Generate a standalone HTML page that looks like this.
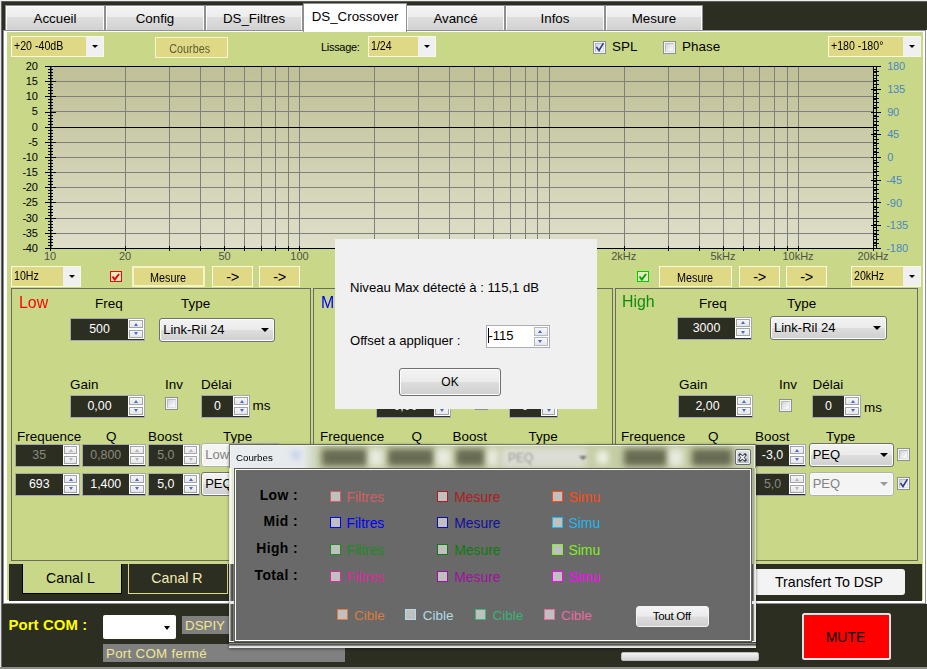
<!DOCTYPE html><html><head><meta charset='utf-8'><title>DSPiy</title><style>
*,*:before,*:after{box-sizing:border-box;margin:0;padding:0}
html,body{width:927px;height:669px;overflow:hidden}
body{background:#2d2e22;font-family:"Liberation Sans",sans-serif;font-size:13.33px;color:#000;position:relative}
.a{position:absolute}
.t{position:absolute;white-space:nowrap;line-height:1}
.tab{position:absolute;top:5px;height:26px;border:1px solid #8e8f8f;border-bottom:none;background:linear-gradient(#f4f4f4 0,#ececec 45%,#dedede 46%,#d0d0d0 100%);box-shadow:inset 1px 1px 0 #fcfcfc,inset -1px 0 0 #fcfcfc;text-align:center;font-size:13.33px;line-height:25px}
.tab.sel{top:3px;height:29px;background:#fff;box-shadow:none;line-height:25px;z-index:3}
.cb{position:absolute;height:21px;border:1px solid #fbf8e0;background:#dfd885;font-size:11px;letter-spacing:-0.35px;line-height:18px;padding-left:2px;white-space:nowrap}
.cb b{display:inline-block;font-weight:normal;font-size:12px;letter-spacing:0;transform:scaleX(.885);transform-origin:0 50%}
.yb b{display:inline-block;font-weight:normal;font-size:12px;letter-spacing:0;transform:scaleX(.9)}
.cb i{position:absolute;right:0;top:0;bottom:0;width:17px;background:#f0f0f0}
.cb i:after{content:"";position:absolute;left:6px;top:8px;border:3px solid transparent;border-top:3px solid #000;border-bottom:none}
.yb{position:absolute;height:21px;border:2px solid #f8f2c6;background:#dfd885;font-size:11px;letter-spacing:-0.35px;line-height:20px;text-align:center;white-space:nowrap}
.yb.dis{color:#5e5c34;border-width:1px;border-color:#faf5cc;line-height:22px;letter-spacing:-0.6px}
.nud{position:absolute;height:23px;border:1px solid #a4a6b0;background:#2d2e22;color:#fff;font-size:12.4px;line-height:21px;text-align:center;white-space:nowrap}
.nud.dis{color:#8a8b80}
.nud s{position:absolute;right:0;top:0;bottom:1px;width:16px;background:#fff;text-decoration:none}
.nud s:before,.nud s:after{content:"";position:absolute;left:1px;width:13.5px;height:8px;border:1px solid #a2a4ac;background:linear-gradient(#f6f6f6,#e6e6e6)}
.nud s:before{top:1px}
.nud s:after{top:10.5px}
.nud u{position:absolute;right:5.6px;width:0;height:0;border:2.7px solid transparent;z-index:2}
.nud u.up{top:3.8px;border-bottom:3.2px solid #4a68d4;border-top:none}
.nud u.dn{top:13.2px;border-top:3.2px solid #4a68d4;border-bottom:none}
.nud.dis u.up{border-bottom-color:#b4b4b4}
.nud.dis u.dn{border-top-color:#b4b4b4}
.nud span{position:absolute;left:0;right:16px;top:0;bottom:0}
.cmb{position:absolute;border:1px solid #707070;border-radius:3px;background:linear-gradient(#f3f3f3 0,#ebebeb 48%,#dddddd 52%,#cfcfcf 100%);box-shadow:inset 0 0 0 1px #fcfcfc;font-size:13px;line-height:22px;padding-left:3.2px;white-space:nowrap}
.cmb:after{content:"";position:absolute;right:5px;top:9px;border:4px solid transparent;border-top:4px solid #000;border-bottom:none}
.cmb.dis{color:#838383;background:#f4f4f4;border-color:#adb2b5}
.cmb.dis:after{border-top-color:#9a9a9a}
.chk{position:absolute;width:13px;height:13px;border:1px solid #8e8f8f;background:#f4f4f4}
.chk:before{content:"";position:absolute;left:1px;top:1px;width:9px;height:9px;border:1px solid #b8bcc4;border-right-color:#dcdee2;border-bottom-color:#dcdee2;background:linear-gradient(135deg,#cfd2d8,#f6f6f6 80%)}
.chk.on:after{content:"";position:absolute;left:1.5px;top:0.5px;width:9px;height:10px;background:#2c3c8c;clip-path:polygon(0.3px 5px,1.6px 3.9px,3.4px 6.6px,7.3px 0.2px,8.6px 1px,3.6px 9.6px)}
.grp{position:absolute;border:1px solid #6a6c60}
.lb{font-size:13.45px}
.big{font-size:16.7px;transform:scaleX(.95);transform-origin:0 0}
.ck{position:absolute;width:11px;height:11px;background:#c0c0c0;border:1.5px solid}
.cl{position:absolute;font-size:13.9px;white-space:nowrap;line-height:1}
.bl{position:absolute;font-size:13.9px;font-weight:bold;white-space:nowrap;line-height:1;text-align:right;width:70px;letter-spacing:.4px}
.wbtn{position:absolute;border:1px solid #707070;border-radius:3px;background:linear-gradient(#f3f3f3 0,#ebebeb 48%,#dddddd 52%,#cfcfcf 100%);box-shadow:inset 0 0 0 1px #fcfcfc;text-align:center;white-space:nowrap}
</style></head><body>
<div class="a" style="left:0;top:0;width:927px;height:1px;background:#eef0f4"></div>
<div class="a" style="left:0;top:0;width:1px;height:669px;background:#e4e7ee"></div>
<div class="a" style="left:1px;top:1px;width:926px;height:1px;background:#5d5e58"></div>
<div class="a" style="left:1px;top:1px;width:1px;height:668px;background:#6b6c68"></div>
<div class="a" style="left:0;top:667px;width:927px;height:2px;background:#8d8e8a"></div>
<div class="tab" style="left:5px;width:100px">Accueil</div>
<div class="tab" style="left:105px;width:100px">Config</div>
<div class="tab" style="left:205px;width:98px">DS_Filtres</div>
<div class="tab sel" style="left:303px;width:104px">DS_Crossover</div>
<div class="tab" style="left:406px;width:99px">Avancé</div>
<div class="tab" style="left:505px;width:100px">Infos</div>
<div class="tab" style="left:605px;width:98px">Mesure</div>
<div class="a" style="left:3px;top:30px;width:923px;height:574px;background:#fff;border:1px solid #8f9096;border-top-color:#8f9096"></div>
<div class="a" style="left:926px;top:30px;width:1px;height:574px;background:#fff"></div>
<div class="a" style="left:7px;top:32px;width:916px;height:568px;background:#c9d888"></div>
<div class="a" style="left:304px;top:30px;width:102px;height:2px;background:#fff;z-index:4"></div>
<div class="cb" style="left:11px;top:36px;width:93px"><b>+20 -40dB</b><i></i></div>
<div class="yb dis" style="left:155px;top:37px;width:73px;padding-right:3px"><b>Courbes</b></div>
<div class="t" style="left:321px;top:42px;font-size:11px;letter-spacing:-0.3px">Lissage:</div>
<div class="cb" style="left:368px;top:36px;width:68px"><b>1/24</b><i></i></div>
<div class="chk on" style="left:593px;top:41px"></div>
<div class="t lb" style="left:612px;top:40px">SPL</div>
<div class="chk" style="left:663px;top:41px"></div>
<div class="t lb" style="left:682px;top:40px">Phase</div>
<div class="cb" style="left:828px;top:36px;width:93px"><b>+180 -180°</b><i></i></div>
<svg class="a" style="left:0;top:58px" width="927" height="205" viewBox="0 58 927 205" shape-rendering="crispEdges"><defs><linearGradient id="pg" x1="0" y1="0" x2="0" y2="1"><stop offset="0" stop-color="#bfc096"/><stop offset="1" stop-color="#dfdfca"/></linearGradient></defs><rect x="51" y="66" width="823" height="182" fill="url(#pg)"/><path d="M51 81.5H873M51 96.5H873M51 111.5H873M51 142.5H873M51 157.5H873M51 172.5H873M51 187.5H873M51 202.5H873M51 218.5H873M51 233.5H873M125.5 66V248M169.5 66V248M200.5 66V248M224.5 66V248M244.5 66V248M261.5 66V248M275.5 66V248M288.5 66V248M299.5 66V248M374.5 66V248M418.5 66V248M449.5 66V248M474.5 66V248M493.5 66V248M510.5 66V248M525.5 66V248M537.5 66V248M549.5 66V248M624.5 66V248M668.5 66V248M699.5 66V248M723.5 66V248M743.5 66V248M759.5 66V248M774.5 66V248M787.5 66V248M798.5 66V248" stroke="#7f807c" stroke-width="1" fill="none"/><path d="M45 66.5H881M51 127.5H876M46 248.5H877" stroke="#000" stroke-width="1" fill="none"/><path d="M50.5 66V249M873.5 66V249M876.5 66V249" stroke="#000" stroke-width="1" fill="none"/><path d="M51.5 66V249" stroke="#000" stroke-opacity=".45" stroke-width="1" fill="none"/><path d="M45 66.5H56M873 66.5H877M48 69.5H53M873 69.5H877M48 72.5H53M873 72.5H877M48 75.5H53M873 75.5H877M48 78.5H53M873 78.5H877M45 81.5H56M873 81.5H877M48 84.5H53M873 84.5H877M48 87.5H53M873 87.5H877M48 90.5H53M873 90.5H877M48 93.5H53M873 93.5H877M45 96.5H56M873 96.5H877M48 99.5H53M873 99.5H877M48 102.5H53M873 102.5H877M48 105.5H53M873 105.5H877M48 108.5H53M873 108.5H877M45 112.5H56M873 112.5H877M48 115.5H53M873 115.5H877M48 118.5H53M873 118.5H877M48 121.5H53M873 121.5H877M48 124.5H53M873 124.5H877M45 127.5H56M873 127.5H877M48 130.5H53M873 130.5H877M48 133.5H53M873 133.5H877M48 136.5H53M873 136.5H877M48 139.5H53M873 139.5H877M45 142.5H56M873 142.5H877M48 145.5H53M873 145.5H877M48 148.5H53M873 148.5H877M48 151.5H53M873 151.5H877M48 154.5H53M873 154.5H877M45 157.5H56M873 157.5H877M48 160.5H53M873 160.5H877M48 163.5H53M873 163.5H877M48 166.5H53M873 166.5H877M48 169.5H53M873 169.5H877M45 172.5H56M873 172.5H877M48 175.5H53M873 175.5H877M48 178.5H53M873 178.5H877M48 181.5H53M873 181.5H877M48 184.5H53M873 184.5H877M45 187.5H56M873 187.5H877M48 190.5H53M873 190.5H877M48 193.5H53M873 193.5H877M48 196.5H53M873 196.5H877M48 199.5H53M873 199.5H877M45 202.5H56M873 202.5H877M48 206.5H53M873 206.5H877M48 209.5H53M873 209.5H877M48 212.5H53M873 212.5H877M48 215.5H53M873 215.5H877M45 218.5H56M873 218.5H877M48 221.5H53M873 221.5H877M48 224.5H53M873 224.5H877M48 227.5H53M873 227.5H877M48 230.5H53M873 230.5H877M45 233.5H56M873 233.5H877M48 236.5H53M873 236.5H877M48 239.5H53M873 239.5H877M48 242.5H53M873 242.5H877M48 245.5H53M873 245.5H877M45 248.5H56M873 248.5H877" stroke="#000" stroke-width="1" fill="none"/><path d="M871 66.5H881M874 71.5H879M874 75.5H879M874 80.5H879M874 84.5H879M871 89.5H881M874 93.5H879M874 98.5H879M874 102.5H879M874 107.5H879M871 112.5H881M874 116.5H879M874 121.5H879M874 125.5H879M874 130.5H879M871 134.5H881M874 139.5H879M874 143.5H879M874 148.5H879M874 152.5H879M871 157.5H881M874 162.5H879M874 166.5H879M874 171.5H879M874 175.5H879M871 180.5H881M874 184.5H879M874 189.5H879M874 193.5H879M874 198.5H879M871 202.5H881M874 207.5H879M874 212.5H879M874 216.5H879M874 221.5H879M871 225.5H881M874 230.5H879M874 234.5H879M874 239.5H879M874 243.5H879M871 248.5H881" stroke="#000" stroke-width="1" fill="none"/><path d="M125.5 246V251M169.5 246V251M200.5 246V251M224.5 246V251M244.5 246V251M261.5 246V251M275.5 246V251M288.5 246V251M299.5 246V251M374.5 246V251M418.5 246V251M449.5 246V251M474.5 246V251M493.5 246V251M510.5 246V251M525.5 246V251M537.5 246V251M549.5 246V251M624.5 246V251M668.5 246V251M699.5 246V251M723.5 246V251M743.5 246V251M759.5 246V251M774.5 246V251M787.5 246V251M798.5 246V251M50.5 246V251M873.5 246V251" stroke="#000" stroke-width="1" fill="none"/><g font-family="Liberation Sans, sans-serif" font-size="11" letter-spacing="-0.3"><text x="37.5" y="70.2" text-anchor="end" fill="#000">20</text><text x="37.5" y="85.2" text-anchor="end" fill="#000">15</text><text x="37.5" y="100.2" text-anchor="end" fill="#000">10</text><text x="37.5" y="115.2" text-anchor="end" fill="#000">5</text><text x="37.5" y="131.2" text-anchor="end" fill="#000">0</text><text x="37.5" y="146.2" text-anchor="end" fill="#000">-5</text><text x="37.5" y="161.2" text-anchor="end" fill="#000">-10</text><text x="37.5" y="176.2" text-anchor="end" fill="#000">-15</text><text x="37.5" y="191.2" text-anchor="end" fill="#000">-20</text><text x="37.5" y="206.2" text-anchor="end" fill="#000">-25</text><text x="37.5" y="222.2" text-anchor="end" fill="#000">-30</text><text x="37.5" y="237.2" text-anchor="end" fill="#000">-35</text><text x="37.5" y="252.2" text-anchor="end" fill="#000">-40</text><text x="887.3" y="70.0" fill="#4a86c0">180</text><text x="887.3" y="92.8" fill="#4a86c0">135</text><text x="887.3" y="115.5" fill="#4a86c0">90</text><text x="887.3" y="138.2" fill="#4a86c0">45</text><text x="887.3" y="161.0" fill="#4a86c0">0</text><text x="886.2" y="183.8" fill="#4a86c0" letter-spacing="0">-45</text><text x="886.2" y="206.5" fill="#4a86c0" letter-spacing="0">-90</text><text x="886.2" y="229.2" fill="#4a86c0" letter-spacing="0">-135</text><text x="886.2" y="252.0" fill="#4a86c0" letter-spacing="0">-180</text><text x="50.1" y="260" text-anchor="middle" fill="#4e5048" letter-spacing="-0.1">10</text><text x="125.1" y="260" text-anchor="middle" fill="#4e5048" letter-spacing="-0.1">20</text><text x="224.4" y="260" text-anchor="middle" fill="#4e5048" letter-spacing="-0.1">50</text><text x="299.4" y="260" text-anchor="middle" fill="#4e5048" letter-spacing="-0.1">100</text><text x="623.7" y="260" text-anchor="middle" fill="#4e5048" letter-spacing="0">2kHz</text><text x="723.0" y="260" text-anchor="middle" fill="#4e5048" letter-spacing="0">5kHz</text><text x="798.0" y="260" text-anchor="middle" fill="#4e5048" letter-spacing="0">10kHz</text><text x="873.0" y="260" text-anchor="middle" fill="#4e5048" letter-spacing="0">20kHz</text></g></svg>
<div class="cb" style="left:11px;top:266px;width:70px"><b>10Hz</b><i></i></div>
<div class="a" style="left:110px;top:270.7px;width:11.5px;height:11.5px;border:1.5px solid #f00;background:#e6ecc0"></div>
<svg class="a" style="left:110px;top:271px" width="12" height="12"><path d="M2.5 5.5L4.8 8.6L9 3" stroke="#e00" stroke-width="2" fill="none"/></svg>
<div class="yb" style="left:132px;top:266px;width:73px"><b>Mesure</b></div>
<div class="yb" style="left:212px;top:266px;width:41px;border-width:1px;border-color:#fbf8de;font-size:14.5px;line-height:21px">-&gt;</div>
<div class="yb" style="left:259px;top:266px;width:41px;border-width:1px;border-color:#fbf8de;font-size:14.5px;line-height:21px">-&gt;</div>
<div class="a" style="left:637px;top:270.7px;width:11.5px;height:11.5px;border:1.5px solid #0c0;background:#e6ecc0"></div>
<svg class="a" style="left:637px;top:271px" width="12" height="12"><path d="M2.5 5.5L4.8 8.6L9 3" stroke="#0a0" stroke-width="2" fill="none"/></svg>
<div class="yb" style="left:659px;top:266px;width:73px;border-width:1px;border-color:#fbf8de;line-height:22px"><b>Mesure</b></div>
<div class="yb" style="left:739px;top:266px;width:41px;border-width:1px;border-color:#fbf8de;font-size:14.5px;line-height:21px">-&gt;</div>
<div class="yb" style="left:786px;top:266px;width:41px;border-width:1px;border-color:#fbf8de;font-size:14.5px;line-height:21px">-&gt;</div>
<div class="cb" style="left:851px;top:266px;width:70px"><b>20kHz</b><i></i></div>
<div class="grp" style="left:11px;top:288px;width:300px;height:273px"></div>
<div class="t big" style="left:19px;top:295.3px;color:#f00">Low</div>
<div class="t lb" style="left:95px;top:297px;">Freq</div>
<div class="t lb" style="left:181px;top:297px;">Type</div>
<div class="nud" style="left:70px;top:318px;width:75px"><span>500</span><s></s><u class="up"></u><u class="dn"></u></div>
<div class="cmb" style="left:159px;top:318px;width:116px;height:24px">Link-Ril 24</div>
<div class="t lb" style="left:70px;top:378px;">Gain</div>
<div class="nud" style="left:70px;top:395px;width:75px"><span>0,00</span><s></s><u class="up"></u><u class="dn"></u></div>
<div class="t lb" style="left:165px;top:378px;">Inv</div>
<div class="chk" style="left:165px;top:397px"></div>
<div class="t lb" style="left:201px;top:378px;">Délai</div>
<div class="nud" style="left:200.8px;top:395px;width:49.5px"><span>0</span><s></s><u class="up"></u><u class="dn"></u></div>
<div class="t lb" style="left:252.5px;top:399px;">ms</div>
<div class="t lb" style="left:17px;top:430px;">Frequence</div>
<div class="t lb" style="left:106px;top:430px;">Q</div>
<div class="t lb" style="left:148px;top:430px;">Boost</div>
<div class="t lb" style="left:223px;top:430px;">Type</div>
<div class="nud dis" style="left:15px;top:444px;width:64.5px"><span>35</span><s></s><u class="up"></u><u class="dn"></u></div>
<div class="nud dis" style="left:81.5px;top:444px;width:64.5px"><span>0,800</span><s></s><u class="up"></u><u class="dn"></u></div>
<div class="nud dis" style="left:148px;top:444px;width:51.5px"><span>5,0</span><s></s><u class="up"></u><u class="dn"></u></div>
<div class="cmb dis" style="left:201px;top:443px;width:80px;height:23.5px">Low Shelf</div>
<div class="nud" style="left:15px;top:473px;width:64.5px"><span>693</span><s></s><u class="up"></u><u class="dn"></u></div>
<div class="nud" style="left:81.5px;top:473px;width:64.5px"><span>1,400</span><s></s><u class="up"></u><u class="dn"></u></div>
<div class="nud" style="left:148px;top:473px;width:51.5px"><span>5,0</span><s></s><u class="up"></u><u class="dn"></u></div>
<div class="cmb" style="left:201px;top:472px;width:80px;height:23.5px">PEQ</div>
<div class="grp" style="left:312.5px;top:288px;width:300px;height:273px"></div>
<div class="t big" style="left:321px;top:295.3px;color:#00f">Mid</div>
<div class="nud" style="left:376px;top:395px;width:75px"><span>0,00</span><s></s><u class="up"></u><u class="dn"></u></div>
<div class="chk" style="left:475px;top:397px"></div>
<div class="nud" style="left:508.5px;top:395px;width:49px"><span>0</span><s></s><u class="up"></u><u class="dn"></u></div>
<div class="t lb" style="left:320px;top:430px;">Frequence</div>
<div class="t lb" style="left:411.5px;top:430px;">Q</div>
<div class="t lb" style="left:452.5px;top:430px;">Boost</div>
<div class="t lb" style="left:528.5px;top:430px;">Type</div>
<div class="grp" style="left:615px;top:288px;width:303px;height:273px"></div>
<div class="t big" style="left:621.5px;top:294px;color:#0f8a0f">High</div>
<div class="t lb" style="left:699px;top:297px;">Freq</div>
<div class="t lb" style="left:787px;top:297px;">Type</div>
<div class="nud" style="left:677px;top:316.5px;width:75px"><span>3000</span><s></s><u class="up"></u><u class="dn"></u></div>
<div class="cmb" style="left:769.8px;top:316px;width:117px;height:24px">Link-Ril 24</div>
<div class="t lb" style="left:679px;top:378px;">Gain</div>
<div class="nud" style="left:678px;top:395px;width:75px"><span>2,00</span><s></s><u class="up"></u><u class="dn"></u></div>
<div class="t lb" style="left:779px;top:378px;">Inv</div>
<div class="chk" style="left:779px;top:399px"></div>
<div class="t lb" style="left:812.5px;top:378px;">Délai</div>
<div class="nud" style="left:811.8px;top:395px;width:49.5px"><span>0</span><s></s><u class="up"></u><u class="dn"></u></div>
<div class="t lb" style="left:864px;top:401px;">ms</div>
<div class="t lb" style="left:621px;top:430px;">Frequence</div>
<div class="t lb" style="left:708px;top:430px;">Q</div>
<div class="t lb" style="left:755px;top:430px;">Boost</div>
<div class="t lb" style="left:826px;top:430px;">Type</div>
<div class="nud" style="left:755px;top:444px;width:51px"><span>-3,0</span><s></s><u class="up"></u><u class="dn"></u></div>
<div class="cmb" style="left:808.5px;top:442.8px;width:85.5px;height:24px">PEQ</div>
<div class="chk" style="left:897px;top:448px"></div>
<div class="nud dis" style="left:755px;top:473px;width:51px"><span>5,0</span><s></s><u class="up"></u><u class="dn"></u></div>
<div class="cmb dis" style="left:808.5px;top:471.8px;width:85.5px;height:24px">PEQ</div>
<div class="chk on" style="left:897px;top:477px"></div>
<div class="a" style="left:9px;top:564px;width:912.8px;height:36.5px;background:#2d2e22"></div>
<div class="a" style="left:22px;top:563.5px;width:100px;height:30px;background:#c9d888;border:solid #000;border-width:0 1.5px 1.5px 1px;text-align:center;font-size:14.2px;line-height:29px;padding-right:3px">Canal L</div>
<div class="a" style="left:127.5px;top:563.5px;width:100px;height:30.3px;border:1px solid #dfd885;border-top:none;color:#f2ecb4;text-align:center;font-size:14.2px;line-height:29px;padding-right:1px">Canal R</div>
<div class="a" style="left:754px;top:569px;width:150.8px;height:25.7px;background:#f3f3f3;border-radius:3px;text-align:center;font-size:14.2px;line-height:26px;padding-right:1px">Transfert To DSP</div>
<div class="t" style="left:8.5px;top:618px;font-size:14.9px;font-weight:bold;color:#ff0;letter-spacing:0.1px">Port COM :</div>
<div class="a" style="left:103px;top:615px;width:73px;height:23.5px;background:#fff;border-radius:2px"></div>
<div class="a" style="left:164px;top:626px;border:3.6px solid transparent;border-top:4px solid #000;border-bottom:none"></div>
<div class="a" style="left:181.5px;top:616px;width:60px;height:18px;background:#808080;color:#f0e794;font-size:13.33px;line-height:19px;padding-left:3.5px">DSPIY</div>
<div class="a" style="left:102.5px;top:644px;width:242px;height:18px;background:#808080;color:#f0e794;font-size:13.33px;line-height:19px;padding-left:3.5px;letter-spacing:0.28px">Port COM fermé</div>
<div class="a" style="left:621px;top:652px;width:138px;height:9px;background:linear-gradient(#f4f4f4,#d2d2d2);border:1px solid #bcbcbc;border-radius:2px"></div>
<div class="a" style="left:802px;top:613px;width:89px;height:47px;background:#f00;border:2px solid #e6e6e6;border-radius:2.5px;text-align:center;font-size:14px;line-height:44px;padding-right:2px">MUTE</div>
<div class="a" style="left:335px;top:239px;width:261.5px;height:169.5px;background:#f0f0f0;z-index:10"></div>
<div class="t" style="left:350px;top:281px;font-size:13.1px;z-index:11">Niveau Max détecté à : 115,1 dB</div>
<div class="t" style="left:350px;top:334px;font-size:13.1px;z-index:11">Offset a appliquer :</div>
<div class="a" style="left:486px;top:325px;width:64px;height:23px;background:#fff;border:1px solid #abadb3;z-index:11;font-size:13px;line-height:19px;padding-left:1.5px">-115</div>
<div class="a" style="left:488px;top:328px;width:1px;height:15px;background:#000;z-index:12"></div>
<div class="a" style="left:533px;top:326px;width:16px;height:21px;background:#fff;z-index:12"></div>
<div class="a" style="left:534px;top:327px;width:13.5px;height:9px;border:1px solid #b4b8c4;background:linear-gradient(#f8f8f8,#e6e6ea);z-index:12"></div>
<div class="a" style="left:534px;top:336.7px;width:13.5px;height:9px;border:1px solid #b4b8c4;background:linear-gradient(#f8f8f8,#e6e6ea);z-index:12"></div>
<div class="a" style="left:538px;top:329.7px;border:2.7px solid transparent;border-bottom:3.3px solid #4464d4;border-top:none;z-index:13"></div>
<div class="a" style="left:538px;top:339.7px;border:2.7px solid transparent;border-top:3.3px solid #4464d4;border-bottom:none;z-index:13"></div>
<div class="wbtn" style="left:399px;top:368px;width:102px;height:27.6px;font-size:12px;line-height:27px;z-index:11">OK</div>
<div class="a" style="left:228.5px;top:444px;width:527.5px;height:203.7px;z-index:20;border:1px solid #7c7f74;border-top-color:#666a5e;background:linear-gradient(180deg,#e4e8dc 0,#dfe4d0 24px,#d3dcae 26px,#ccd69a 118px,#80827a 120px,#6e7066 161px,#5c5e56 100%);box-shadow:inset 0 0 0 1px #f2f4ec,0 1px 3px rgba(0,0,0,.45)"></div>
<div class="a" style="left:228.5px;top:468px;width:8px;height:96px;z-index:21;background:linear-gradient(90deg,#d8dad0 0,#fafaf8 1px,#f0f2e6 2.5px,#e2e8cc 3.5px,#eef0e8 5px,#f4f4f0 6px,#6a6c62 6px,#6a6c62 7px,#fff 7px)"></div>
<div class="a" style="left:228.5px;top:564px;width:8px;height:78px;z-index:21;background:linear-gradient(90deg,#dcdcdc 0,#c4c4c2 1px,#6a6c64 2px,#3e4038 3.2px,#74766e 4.4px,#c4c4c0 5.6px,#c8c8c4 6px,#3e4038 6px,#3e4038 7px,#fff 7px)"></div>
<div class="a" style="left:749px;top:468px;width:7px;height:96px;z-index:21;background:linear-gradient(270deg,#e8eae0 0,#b8c09c 1.5px,#9ca484 3px,#c6ccb0 4.5px,#6a6c62 5px,#6a6c62 6px,#fff 6px)"></div>
<div class="a" style="left:749px;top:564px;width:7px;height:78px;z-index:21;background:linear-gradient(270deg,#f0f0f0 0,#e4e4e4 1.4px,#8c8e88 2.4px,#4c4e46 3.6px,#90928c 4.8px,#3e4038 5px,#3e4038 6px,#fff 6px)"></div>
<div class="a" style="left:229px;top:640.5px;width:526.5px;height:7.2px;z-index:21;background:linear-gradient(0deg,#f0f0f0 0,#e0e0e0 1.4px,#8c8e88 2.4px,#4c4e46 3.6px,#90928c 4.8px,#a4a6a0 5.2px,#3e4038 5.2px,#3e4038 6.2px,#fff 6.2px)"></div>
<div class="a" style="left:229.5px;top:600.5px;width:4.5px;height:3px;z-index:21;background:#e8e8e8;filter:blur(.6px)"></div>
<div class="a" style="left:751.5px;top:600.5px;width:4px;height:3px;z-index:21;background:#e8e8e8;filter:blur(.6px)"></div>
<div class="a" style="left:230.5px;top:446px;width:523.5px;height:22px;z-index:20;background:linear-gradient(90deg,#e9ecf0 0,#e6eaec 72px,#c4cca4 90px,#c4cca4 100%)"></div>
<div class="a" style="left:322px;top:449px;width:45px;height:17px;background:#50543f;filter:blur(3px);opacity:0.8;z-index:21"></div>
<div class="a" style="left:388px;top:449px;width:46px;height:17px;background:#50543f;filter:blur(3px);opacity:0.8;z-index:21"></div>
<div class="a" style="left:456px;top:449px;width:29px;height:17px;background:#50543f;filter:blur(3px);opacity:0.8;z-index:21"></div>
<div class="a" style="left:624px;top:449px;width:43px;height:17px;background:#50543f;filter:blur(3px);opacity:0.8;z-index:21"></div>
<div class="a" style="left:692px;top:449px;width:40px;height:17px;background:#50543f;filter:blur(3px);opacity:0.8;z-index:21"></div>
<div class="a" style="left:369px;top:449px;width:14px;height:17px;background:#eceee6;filter:blur(3px);opacity:0.9;z-index:21"></div>
<div class="a" style="left:436px;top:449px;width:15px;height:17px;background:#eceee6;filter:blur(3px);opacity:0.9;z-index:21"></div>
<div class="a" style="left:487px;top:449px;width:11px;height:17px;background:#eceee6;filter:blur(3px);opacity:0.9;z-index:21"></div>
<div class="a" style="left:669px;top:449px;width:14px;height:17px;background:#eceee6;filter:blur(3px);opacity:0.9;z-index:21"></div>
<div class="a" style="left:501px;top:448px;width:86px;height:19px;background:#dedfd8;filter:blur(3px);opacity:0.95;z-index:21"></div>
<div class="a" style="left:597px;top:451px;width:11px;height:13px;background:#f4f6ee;filter:blur(3px);opacity:0.9;z-index:21"></div>
<div class="a" style="left:292px;top:451px;width:8px;height:8px;background:#b8c4ec;filter:blur(3px);opacity:0.8;z-index:21"></div>
<div class="t" style="left:508px;top:452px;font-size:12px;color:#9a9c94;filter:blur(1.2px);z-index:21">PEQ</div>
<div class="a" style="left:579px;top:456px;border:4px solid transparent;border-top:4px solid #6c6e66;border-bottom:none;filter:blur(1px);z-index:21"></div>
<div class="t" style="left:236.3px;top:453.6px;font-size:9.2px;z-index:22;transform:scaleX(1.06);transform-origin:0 0">Courbes</div>
<div class="a" style="left:734.5px;top:449px;width:16px;height:16px;z-index:22;border:1px solid #666a72;border-radius:2px;background:linear-gradient(#e4e7ea,#b4b8c0);box-shadow:inset 0 0 0 1px #f2f4f6"></div>
<svg class="a" style="left:738px;top:453px;z-index:23" width="9" height="9"><path d="M2 2L7 7M7 2L2 7" stroke="#3a3e48" stroke-width="3" stroke-linecap="square"/><path d="M2.2 2.2L6.8 6.8M6.8 2.2L2.2 6.8" stroke="#fff" stroke-width="1.5"/></svg>
<div class="a" style="left:234px;top:468px;width:517.5px;height:174.3px;z-index:22;background:#fff;border:1px solid #5e6156"></div>
<div class="a" style="left:236.3px;top:470.2px;width:513.5px;height:170px;z-index:23;background:#696969"></div>
<div class="bl" style="left:228px;top:488.7px;z-index:24">Low :</div>
<div class="ck" style="left:329.5px;top:490.5px;border-color:#d26060;z-index:24"></div>
<div class="cl" style="left:346.5px;top:490.8px;color:#d26060;z-index:24">Filtres</div>
<div class="ck" style="left:437.2px;top:490.5px;border-color:#b01c1c;z-index:24"></div>
<div class="cl" style="left:454.2px;top:490.8px;color:#b01c1c;z-index:24">Mesure</div>
<div class="ck" style="left:551.5px;top:490.5px;border-color:#ff4a10;z-index:24"></div>
<div class="cl" style="left:568.5px;top:490.8px;color:#ff4a10;z-index:24">Simu</div>
<div class="bl" style="left:228px;top:514.7px;z-index:24">Mid :</div>
<div class="ck" style="left:329.5px;top:516.5px;border-color:#0000ff;z-index:24"></div>
<div class="cl" style="left:346.5px;top:516.8px;color:#0000ff;z-index:24">Filtres</div>
<div class="ck" style="left:437.2px;top:516.5px;border-color:#10109c;z-index:24"></div>
<div class="cl" style="left:454.2px;top:516.8px;color:#10109c;z-index:24">Mesure</div>
<div class="ck" style="left:551.5px;top:516.5px;border-color:#1eb8f0;z-index:24"></div>
<div class="cl" style="left:568.5px;top:516.8px;color:#1eb8f0;z-index:24">Simu</div>
<div class="bl" style="left:228px;top:541.7px;z-index:24">High :</div>
<div class="ck" style="left:329.5px;top:543.5px;border-color:#1c8c1c;z-index:24"></div>
<div class="cl" style="left:346.5px;top:543.8px;color:#1c8c1c;z-index:24">Filtres</div>
<div class="ck" style="left:437.2px;top:543.5px;border-color:#0e7c0e;z-index:24"></div>
<div class="cl" style="left:454.2px;top:543.8px;color:#0e7c0e;z-index:24">Mesure</div>
<div class="ck" style="left:551.5px;top:543.5px;border-color:#80f020;z-index:24"></div>
<div class="cl" style="left:568.5px;top:543.8px;color:#80f020;z-index:24">Simu</div>
<div class="bl" style="left:228px;top:568.7px;z-index:24">Total :</div>
<div class="ck" style="left:329.5px;top:570.5px;border-color:#d82c9c;z-index:24"></div>
<div class="cl" style="left:346.5px;top:570.8px;color:#d82c9c;z-index:24">Filtres</div>
<div class="ck" style="left:437.2px;top:570.5px;border-color:#a010a0;z-index:24"></div>
<div class="cl" style="left:454.2px;top:570.8px;color:#a010a0;z-index:24">Mesure</div>
<div class="ck" style="left:551.5px;top:570.5px;border-color:#ff00ff;z-index:24"></div>
<div class="cl" style="left:568.5px;top:570.8px;color:#ff00ff;z-index:24">Simu</div>
<div class="ck" style="left:336.5px;top:609px;border-color:#dc7c3c;z-index:24"></div>
<div class="cl" style="left:354px;top:608.5px;color:#dc7c3c;z-index:24;font-size:13.5px">Cible</div>
<div class="ck" style="left:405.3px;top:609px;border-color:#b0dce6;z-index:24"></div>
<div class="cl" style="left:422.8px;top:608.5px;color:#b0dce6;z-index:24;font-size:13.5px">Cible</div>
<div class="ck" style="left:475px;top:609px;border-color:#3cb474;z-index:24"></div>
<div class="cl" style="left:492.5px;top:608.5px;color:#3cb474;z-index:24;font-size:13.5px">Cible</div>
<div class="ck" style="left:543.5px;top:609px;border-color:#f068a4;z-index:24"></div>
<div class="cl" style="left:561px;top:608.5px;color:#f068a4;z-index:24;font-size:13.5px">Cible</div>
<div class="wbtn" style="left:636.4px;top:606.4px;width:72.6px;height:20.6px;border-color:#f4f4f4;box-shadow:none;font-size:11.5px;letter-spacing:-0.25px;line-height:18.5px;padding-right:2px;z-index:24">Tout Off</div>
</body></html>
